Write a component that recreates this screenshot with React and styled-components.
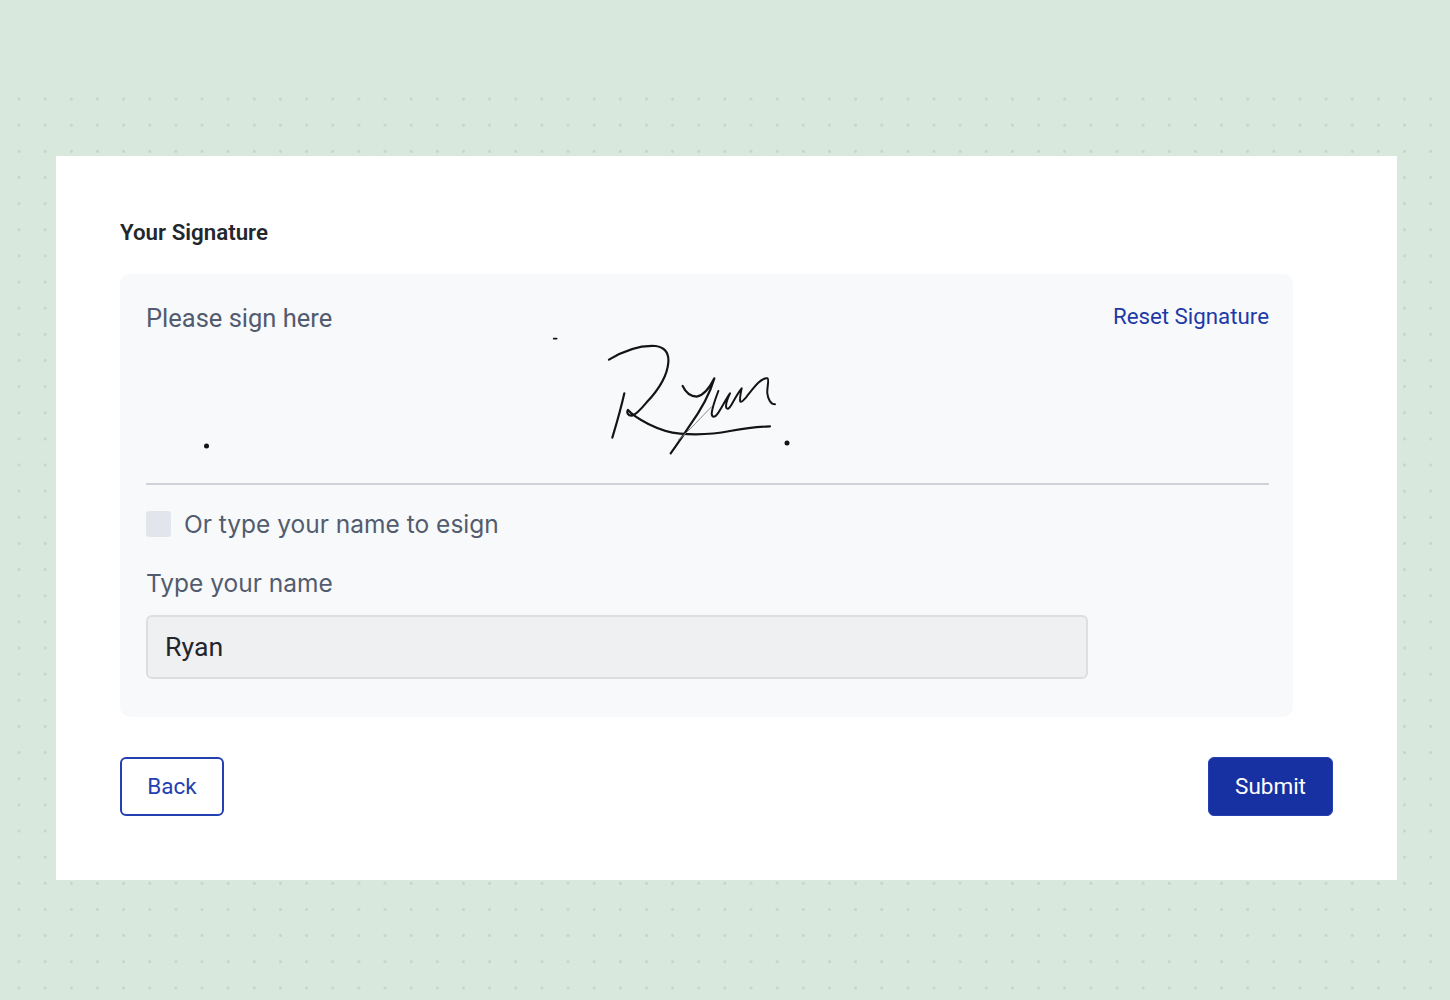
import React from 'react';
import styled, { createGlobalStyle } from 'styled-components';

const GlobalStyle = createGlobalStyle`
  html, body {
    margin: 0;
    padding: 0;
    background: #d9e8dd;
    font-family: Roboto, "Liberation Sans", sans-serif;
  }
  * {
    box-sizing: border-box;
  }
`;

const Page = styled.div`
  width: 1450px;
  height: 1000px;
  padding-top: 90px;
  overflow: hidden;
`;

const DottedArea = styled.div`
  height: 910px;
  padding: 66px 53px 0 56px;
  background-image: radial-gradient(circle, #c4d5ca 1.1px, transparent 1.8px);
  background-size: 26.15px 26.15px;
  background-position: 6px -4px;
`;

const Card = styled.div`
  height: 724px;
  padding: 61px 64px 0;
  background: #fff;
`;

const Title = styled.h2`
  margin: 0 0 26px;
  font-size: 22.3px;
  line-height: 31px;
  font-weight: 600;
  color: #23272d;
`;

const Panel = styled.div`
  width: 1173px;
  height: 443px;
  margin-bottom: 40px;
  padding: 26px 24px 0 26px;
  background: #f8f9fb;
  border-radius: 10px;
`;

const SignaturePad = styled.div`
  position: relative;
  display: flex;
  justify-content: space-between;
  align-items: flex-start;
  height: 185px;
  border-bottom: 2px solid #cfd2d8;
`;

const PadLabel = styled.span`
  font-size: 25.5px;
  line-height: 36px;
  color: #525c6e;
`;

const ResetLink = styled.a`
  font-size: 22.3px;
  line-height: 32px;
  color: #1e3aa8;
  cursor: pointer;
`;

const Drawing = styled.svg`
  position: absolute;
  left: 0;
  top: 0;
  width: 1123px;
  height: 184px;
`;

const CheckRow = styled.label`
  display: flex;
  align-items: center;
  gap: 13px;
  margin-top: 21px;
  font-family: Inter, Roboto, sans-serif;
  font-size: 24.5px;
  line-height: 36px;
  color: #525c6e;
`;

const CheckBox = styled.span`
  width: 25px;
  height: 26px;
  border-radius: 3px;
  background: #e3e5ec;
`;

const FieldLabel = styled.div`
  margin-top: 23px;
  font-family: Inter, Roboto, sans-serif;
  font-size: 24.5px;
  line-height: 36px;
  color: #525c6e;
`;

const NameInput = styled.input`
  display: block;
  width: 942px;
  height: 64px;
  margin-top: 14px;
  padding: 0 17px;
  border: 2px solid #dcdee1;
  border-radius: 6px;
  background: #eff0f2;
  font-family: inherit;
  font-size: 26.7px;
  color: #23272d;
  outline: none;
`;

const Actions = styled.div`
  display: flex;
  justify-content: space-between;
`;

const Button = styled.button`
  height: 59px;
  width: ${(p) => p.$width}px;
  padding: 0 0 2px;
  border: ${(p) => (p.$primary ? '1px' : '2px')} solid #2340b0;
  border-radius: 6px;
  background: ${(p) => (p.$primary ? '#1831a2' : '#fff')};
  color: ${(p) => (p.$primary ? '#fff' : '#2340b0')};
  font-family: inherit;
  font-size: 22.5px;
  font-weight: 400;
  cursor: pointer;
`;

function Signature() {
  return (
    <Drawing viewBox="0 0 1123 184" fill="none" stroke="#141414" strokeLinecap="round" strokeLinejoin="round">
      {/* traced in page pixels, pad origin is 146,300 */}
      <g transform="translate(394 25) scale(0.33333)">
        <path d="M41 41h9" strokeWidth="5" />
        <path strokeWidth="6.5" d="M207 104C250 78 300 60 347 63C375 67 387 85 385 112C382 150 355 195 320 232C305 250 290 268 276 272C264 273 259 262 264 255C275 268 300 284 325 297C355 312 385 323 420 326C470 330 520 328 570 318C610 311 650 305 690 304" />
        <path strokeWidth="6.5" d="M253 205C243 250 230 295 217 338" />
        <path strokeWidth="6.5" d="M428 183C436 200 450 214 470 215C490 212 508 190 523 160C510 205 478 262 447 305C428 335 408 362 392 385" />
        <path stroke="#8a8a8a" strokeWidth="3" d="M415 345C450 315 485 275 515 245" />
        <path strokeWidth="6" d="M535 198C526 222 516 250 515 266C516 278 525 278 533 266C545 248 558 222 570 205C562 222 556 240 559 249C563 254 568 250 574 240C582 226 592 206 605 190C602 205 598 222 601 230C606 232 612 224 620 215C640 190 662 158 682 160C689 162 680 190 682 205C684 222 692 238 705 238" />
      </g>
      <circle cx="60.5" cy="146" r="2.5" fill="#141414" stroke="none" />
      <circle cx="641" cy="143" r="2.5" fill="#141414" stroke="none" />
    </Drawing>
  );
}

export default function App() {
  return (
    <Page>
      <GlobalStyle />
      <DottedArea>
        <Card>
          <Title>Your Signature</Title>
          <Panel>
            <SignaturePad>
              <PadLabel>Please sign here</PadLabel>
              <ResetLink>Reset Signature</ResetLink>
              <Signature />
            </SignaturePad>
            <CheckRow>
              <CheckBox />
              Or type your name to esign
            </CheckRow>
            <FieldLabel>Type your name</FieldLabel>
            <NameInput defaultValue="Ryan" readOnly />
          </Panel>
          <Actions>
            <Button $width={104}>Back</Button>
            <Button $width={125} $primary>Submit</Button>
          </Actions>
        </Card>
      </DottedArea>
    </Page>
  );
}
